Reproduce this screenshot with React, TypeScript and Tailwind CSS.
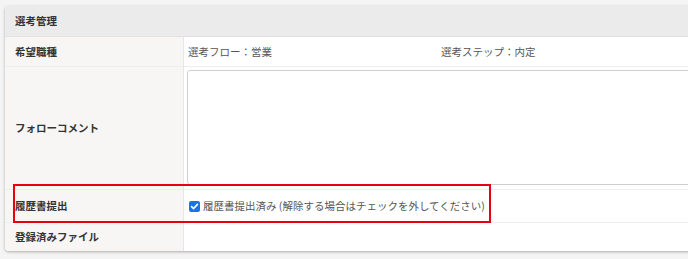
import React from "react";

const font = { fontFamily: '"Noto Sans CJK JP", "Noto Sans", sans-serif' };

export default function App() {
  return (
    <div
      className="relative w-[688px] h-[259px] overflow-hidden bg-[#f4f4f4] pl-[5px] pt-[6px]"
      style={font}
    >
      <div className="w-[720px] bg-white rounded-[4px] shadow-[0_1px_3px_rgba(0,0,0,0.3)] overflow-hidden">
        <div className="h-[31px] bg-[#ebebeb] border-b border-[#e2e2e2] flex items-center px-[10px] text-[10.5px] font-bold text-[#333]">
          選考管理
        </div>
        <div className="grid grid-cols-[179px_1fr]">
          <div className="h-[30px] bg-[#f7f6f4] border-r border-[#e6e6e6] border-b border-b-[#ededed] flex items-center px-[10px] text-[10.5px] font-bold text-[#333]">
            希望職種
          </div>
          <div className="h-[30px] border-b border-[#ededed] flex items-center pl-[4px] text-[10.5px] text-[#555]">
            <span className="w-[253px]">選考フロー：営業</span>
            <span>選考ステップ：内定</span>
          </div>

          <div className="h-[123px] bg-[#f7f6f4] border-r border-[#e6e6e6] border-b border-b-[#ededed] flex items-center px-[10px] text-[10.5px] font-bold text-[#333]">
            フォローコメント
          </div>
          <div className="h-[123px] border-b border-[#ededed] pt-[3px] pl-[3px]">
            <div className="h-[115px] border border-[#cfcfcf] rounded-[3px] bg-white" />
          </div>

          <div className="h-[33px] bg-[#f7f6f4] border-r border-[#e6e6e6] border-b border-b-[#ededed] flex items-center px-[10px] text-[10.5px] font-bold text-[#333]">
            履歴書提出
          </div>
          <div className="h-[33px] border-b border-[#ededed] flex items-center pl-[5px] text-[10.5px] text-[#555] gap-[3px]">
            <span className="w-[11px] h-[11px] rounded-[2px] bg-[#1a73e8] flex items-center justify-center">
              <svg width="9" height="9" viewBox="0 0 10 10">
                <path d="M1.8 5.2 L4 7.3 L8.3 2.6" fill="none" stroke="white" strokeWidth="1.8" strokeLinecap="round" strokeLinejoin="round" />
              </svg>
            </span>
            <span>履歴書提出済み (解除する場合はチェックを外してください)</span>
          </div>

          <div className="h-[28px] bg-[#f7f6f4] border-r border-[#e6e6e6] flex items-center px-[10px] text-[10.5px] font-bold text-[#333]">
            登録済みファイル
          </div>
          <div className="h-[28px]" />
        </div>
      </div>
      <div className="absolute left-[13px] top-[184px] w-[478px] h-[39px] border-2 border-[#e60012]" />
    </div>
  );
}
